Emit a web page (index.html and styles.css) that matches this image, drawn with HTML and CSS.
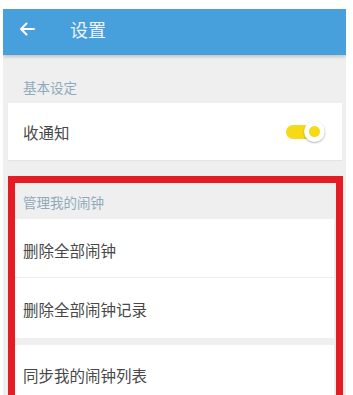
FILE: index.html
```html
<!DOCTYPE html>
<html lang="zh-CN">
<head>
<meta charset="utf-8">
<title>设置</title>
<link rel="stylesheet" href="styles.css">
</head>
<body>
<div class="screen">
  <header class="appbar">
    <svg class="back" width="16" height="14" viewBox="0 0 16 14">
      <path d="M15 7H2M7.5 1.5L2 7l5.5 5.5" fill="none" stroke="#ffffff" stroke-width="2" stroke-linecap="round" stroke-linejoin="round"/>
    </svg>
    <span class="title">设置</span>
  </header>

  <div class="section-label">基本设定</div>
  <div class="card">
    <span class="row-text">收通知</span>
    <span class="toggle"><span class="knob"><span class="dot"></span></span></span>
  </div>

  <section class="highlight">
    <div class="group-label">管理我的闹钟</div>
    <div class="row row-first"><span class="row-text">删除全部闹钟</span></div>
    <div class="row row-second"><span class="row-text">删除全部闹钟记录</span></div>
    <div class="row row-third"><span class="row-text">同步我的闹钟列表</span></div>
  </section>
</div>
</body>
</html>
```

FILE: styles.css
```css
html, body {
  margin: 0;
  padding: 0;
  background: #ffffff;
  height: 395px;
  overflow: hidden;
}

body {
  font-family: "Noto Sans CJK SC", "Noto Sans", sans-serif;
}

.screen {
  margin: 9px 7px 0 3px;
  background: #efefef;
  height: 386px;
  overflow: hidden;
}

.appbar {
  height: 46px;
  box-sizing: border-box;
  background: #479fdb;
  display: flex;
  align-items: center;
  padding: 0 0 6px 16px;
  box-shadow: 0 2px 3px rgba(0, 0, 0, 0.18);
  position: relative;
}

.back {
  display: block;
}

.title {
  margin-left: 35px;
  color: #eef5fb;
  font-size: 18px;
  line-height: 20px;
}

.section-label {
  padding: 24px 20px 8px;
  font-size: 13.5px;
  line-height: 16px;
  color: #8faabb;
}

.card {
  margin: 0 4px 0 5px;
  height: 57px;
  background: #ffffff;
  display: flex;
  align-items: center;
  justify-content: space-between;
  padding: 0 17px 0 15px;
  box-shadow: 0 1px 1px rgba(0, 0, 0, 0.04);
}

.row-text {
  font-size: 15.5px;
  line-height: 20px;
  color: #484848;
}

.toggle {
  width: 39px;
  height: 14px;
  border-radius: 7px;
  background: #f6d917;
  display: flex;
  align-items: center;
  justify-content: flex-end;
}

.knob {
  width: 21px;
  height: 21px;
  border-radius: 50%;
  background: #ffffff;
  box-shadow: 0 1px 2px rgba(0, 0, 0, 0.3);
  display: flex;
  align-items: center;
  justify-content: center;
}

.dot {
  width: 11px;
  height: 11px;
  border-radius: 50%;
  background: #f6d917;
}

.highlight {
  margin: 16px 3px 0 5px;
  border: 7px solid #e61c25;
  border-bottom: none;
  height: 212px;
}

.group-label {
  height: 36px;
  box-sizing: border-box;
  padding: 11px 8px 0;
  font-size: 13.5px;
  line-height: 16px;
  color: #8faabb;
}

.row {
  margin-right: 2px;
  background: #ffffff;
  display: flex;
  align-items: center;
  padding-left: 8px;
  box-sizing: border-box;
}

.row-first {
  height: 59px;
  padding-top: 4px;
  border-bottom: 1px solid #ececec;
}

.row-second {
  height: 60px;
  margin-bottom: 7px;
  padding-top: 2px;
}

.row-third {
  height: 60px;
}
```
